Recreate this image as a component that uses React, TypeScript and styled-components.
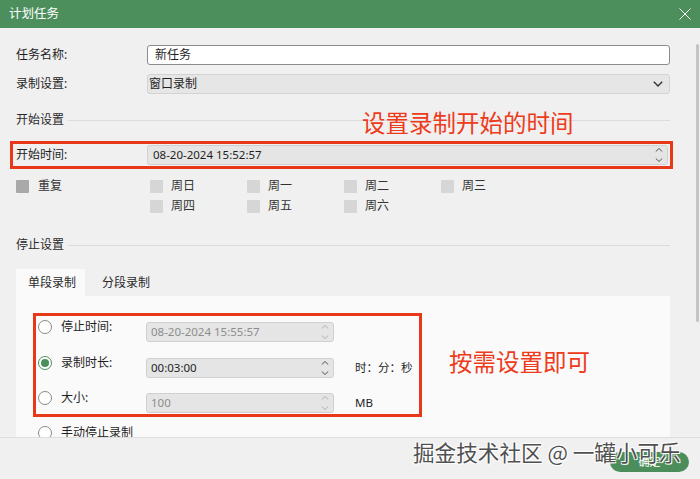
import React from 'react';
import styled, { createGlobalStyle } from 'styled-components';

const GlobalStyle = createGlobalStyle`
  html, body { margin: 0; padding: 0; }
  body {
    width: 700px; height: 479px; overflow: hidden;
    font-family: "Noto Sans", "Noto Sans CJK SC", sans-serif;
    font-size: 12px; color: #1f1f1f; background: #f0f0f0;
  }
  * { box-sizing: border-box; }
`;

const RED = '#e8381a';
const GREEN = '#4b8e5b';

const Window = styled.div`
  position: relative;
  width: 700px;
  height: 479px;
  display: flex;
  flex-direction: column;
  background: #f0f0f0;
  overflow: hidden;
`;

const TitleBar = styled.div`
  height: 28px;
  flex: none;
  background: #4c8f5d;
  color: #fff;
  display: flex;
  align-items: center;
  justify-content: space-between;
  padding: 0 9px 0 9px;
  font-size: 12.5px;
  line-height: 28px;
`;

const Main = styled.div`
  flex: 1;
  display: flex;
  min-height: 0;
  overflow: hidden;
`;

const Content = styled.div`
  flex: 1;
  display: flex;
  flex-direction: column;
  padding: 17px 20px 0 16px;
`;

const ScrollTrack = styled.div`
  width: 10px;
  flex: none;
  position: relative;
`;

const ScrollThumb = styled.div`
  position: absolute;
  right: 1px;
  top: 16px;
  width: 3px;
  height: 278px;
  border-radius: 2px;
  background: #c4c4c4;
`;

const FormRow = styled.div<{ $mt?: number }>`
  display: grid;
  grid-template-columns: 131px 1fr;
  align-items: center;
  height: 20px;
  margin-top: ${p => p.$mt ?? 0}px;
`;

const Label = styled.span`
  line-height: 16px;
  color: #1f1f1f;
`;

const TextInput = styled.div`
  height: 20px;
  background: #fff;
  border: 1px solid #8c8c8c;
  border-radius: 3px;
  padding: 0 7px;
  line-height: 18px;
`;

const Select = styled.div`
  height: 20px;
  background: #e6e6e6;
  border: 1px solid #d3d3d3;
  border-radius: 3px;
  padding: 0 6px 0 1px;
  display: flex;
  align-items: center;
  justify-content: space-between;
  line-height: 18px;
`;

const SpinBox = styled.div<{ $disabled?: boolean; $pl?: number }>`
  height: 20px;
  background: #e5e5e5;
  border: 1px solid #d0d0d0;
  border-radius: 3px;
  padding: 0 4px 0 ${p => p.$pl ?? 4}px;
  display: flex;
  align-items: center;
  justify-content: space-between;
  font-size: 11.5px;
  line-height: 18px;
  color: ${p => (p.$disabled ? '#8d8d8d' : '#1f1f1f')};
`;

const SectionHeading = styled.div<{ $mt: number }>`
  display: flex;
  align-items: center;
  gap: 4px;
  height: 16px;
  line-height: 16px;
  margin-top: ${p => p.$mt}px;
  color: #2a2a2a;
  &::after {
    content: '';
    flex: 1;
    height: 1px;
    background: #dcdcdc;
  }
`;

const HighlightRow = styled(FormRow)`
  height: 28px;
  border: 3px solid ${RED};
  margin: 13px -3px 0 -6px;
  padding: 1px 2px 1px 3px;
`;

const CheckGrid = styled.div`
  display: grid;
  grid-template-columns: 134px repeat(4, 97px);
  grid-auto-rows: 20px;
  margin-top: 7px;
`;

const CheckItem = styled.div<{ $gap: number }>`
  display: flex;
  align-items: center;
  gap: ${p => p.$gap}px;
  color: #333;
  line-height: 16px;
`;

const CheckBox = styled.span<{ $dark?: boolean }>`
  width: 13px;
  height: 13px;
  flex: none;
  background: ${p => (p.$dark ? '#a9a9a9' : '#d6d6d6')};
  border-radius: 1px;
`;

const TabBar = styled.div`
  display: flex;
  gap: 5px;
  margin-top: 16px;
  height: 27px;
`;

const Tab = styled.div<{ $active?: boolean }>`
  height: 27px;
  line-height: 27px;
  padding: 0 9px 0 12px;
  background: ${p => (p.$active ? '#fafafa' : 'transparent')};
  color: #2a2a2a;
`;

const Panel = styled.div`
  flex: 1;
  background: #fafafa;
  padding: 17px 0 0 17px;
  display: flex;
  flex-direction: column;
`;

const StopBox = styled.div`
  width: 389px;
  border: 3px solid ${RED};
  padding: 6px 0 1px 2px;
  display: flex;
  flex-direction: column;
  gap: 15.5px;
`;

const StopRow = styled.div`
  display: grid;
  grid-template-columns: 14px 94px 188px auto;
  align-items: start;
  height: 20px;
`;

const StopLabel = styled.span`
  padding-left: 9px;
  margin-top: -3px;
  line-height: 16px;
  color: #1f1f1f;
`;

const Unit = styled.span`
  align-self: center;
  padding-left: 21px;
  line-height: 16px;
  font-size: 11.5px;
  color: #1f1f1f;
  white-space: nowrap;
`;

const Radio = styled.span<{ $checked?: boolean }>`
  width: 14px;
  height: 14px;
  margin-top: -2px;
  border-radius: 50%;
  border: 1px solid ${p => (p.$checked ? GREEN : '#8a8a8a')};
  background: #fff;
  display: flex;
  align-items: center;
  justify-content: center;
  &::after {
    content: '';
    width: 8px;
    height: 8px;
    border-radius: 50%;
    background: ${p => (p.$checked ? GREEN : 'transparent')};
  }
`;

const ManualRow = styled.div`
  display: flex;
  align-items: center;
  gap: 9px;
  height: 20px;
  margin-top: 6px;
  padding-left: 5px;
  line-height: 16px;
  & > span:first-child { margin-top: 0; }
`;

const Footer = styled.div`
  height: 42px;
  flex: none;
  border-top: 1px solid #dedede;
  background: #f0f0f0;
  display: flex;
  justify-content: flex-end;
  align-items: flex-start;
  padding: 14px 11px 0 0;
`;

const OkButton = styled.div`
  width: 79px;
  height: 20px;
  border-radius: 10px;
  background: ${GREEN};
  color: #fff;
  font-size: 11px;
  line-height: 20px;
  text-align: center;
`;

const Annotation = styled.div<{ $left: number; $top: number }>`
  position: absolute;
  left: ${p => p.$left}px;
  top: ${p => p.$top}px;
  font-family: "Noto Sans CJK SC", sans-serif;
  font-size: 23.5px;
  line-height: 28px;
  color: #ee3b1b;
  white-space: nowrap;
`;

const Watermark = styled.div`
  position: absolute;
  left: 413px;
  top: 439px;
  font-family: "Noto Sans CJK SC", sans-serif;
  font-size: 21.6px;
  line-height: 25px;
  color: #505050;
  white-space: nowrap;
  text-shadow: 1px 1px 0 #fff, -1px -1px 0 rgba(255,255,255,0.8), 1px -1px 0 rgba(255,255,255,0.8), -1px 1px 0 rgba(255,255,255,0.8);
`;

const CloseIcon = () => (
  <svg width="12" height="12" viewBox="0 0 12 12">
    <path d="M0.5 0.5 L11.5 11.5 M11.5 0.5 L0.5 11.5" stroke="#fff" strokeWidth="1" fill="none" />
  </svg>
);

const ChevronDown = () => (
  <svg width="10" height="6" viewBox="0 0 10 6">
    <path d="M0.8 0.8 L5 5 L9.2 0.8" stroke="#333" strokeWidth="1.4" fill="none" />
  </svg>
);

const Spinner = ({ color = '#555' }: { color?: string }) => (
  <svg width="8" height="16" viewBox="0 0 8 16">
    <path d="M0.8 4.5 L4 1.5 L7.2 4.5" stroke={color} strokeWidth="1" fill="none" />
    <path d="M0.8 11.5 L4 14.5 L7.2 11.5" stroke={color} strokeWidth="1" fill="none" />
  </svg>
);

const days: (string | null)[] = ['周日', '周一', '周二', '周三', null, '周四', '周五', '周六'];

export default function App() {
  return (
    <>
      <GlobalStyle />
      <Window>
        <TitleBar>
          <span>计划任务</span>
          <CloseIcon />
        </TitleBar>
        <Main>
          <Content>
            <FormRow>
              <Label>任务名称:</Label>
              <TextInput>新任务</TextInput>
            </FormRow>
            <FormRow $mt={9}>
              <Label>录制设置:</Label>
              <Select>
                <span>窗口录制</span>
                <ChevronDown />
              </Select>
            </FormRow>
            <SectionHeading $mt={18}>开始设置</SectionHeading>
            <HighlightRow>
              <Label>开始时间:</Label>
              <SpinBox $pl={5}>
                <span>08-20-2024 15:52:57</span>
                <Spinner />
              </SpinBox>
            </HighlightRow>
            <CheckGrid>
              <CheckItem $gap={9}>
                <CheckBox $dark />
                <span>重复</span>
              </CheckItem>
              {days.map((d, i) =>
                d ? (
                  <CheckItem key={i} $gap={8}>
                    <CheckBox />
                    <span>{d}</span>
                  </CheckItem>
                ) : (
                  <span key={i} />
                )
              )}
            </CheckGrid>
            <SectionHeading $mt={21}>停止设置</SectionHeading>
            <TabBar>
              <Tab $active>单段录制</Tab>
              <Tab>分段录制</Tab>
            </TabBar>
            <Panel>
              <StopBox>
                <StopRow>
                  <Radio />
                  <StopLabel>停止时间:</StopLabel>
                  <SpinBox $disabled>
                    <span>08-20-2024 15:55:57</span>
                    <Spinner color="#b0b0b0" />
                  </SpinBox>
                </StopRow>
                <StopRow>
                  <Radio $checked />
                  <StopLabel>录制时长:</StopLabel>
                  <SpinBox>
                    <span>00:03:00</span>
                    <Spinner />
                  </SpinBox>
                  <Unit>时：分：秒</Unit>
                </StopRow>
                <StopRow>
                  <Radio />
                  <StopLabel>大小:</StopLabel>
                  <SpinBox $disabled>
                    <span>100</span>
                    <Spinner color="#b0b0b0" />
                  </SpinBox>
                  <Unit>MB</Unit>
                </StopRow>
              </StopBox>
              <ManualRow>
                <Radio />
                <span>手动停止录制</span>
              </ManualRow>
            </Panel>
          </Content>
          <ScrollTrack>
            <ScrollThumb />
          </ScrollTrack>
        </Main>
        <Footer>
          <OkButton>确定</OkButton>
        </Footer>
        <Annotation $left={362} $top={108}>设置录制开始的时间</Annotation>
        <Annotation $left={449} $top={347}>按需设置即可</Annotation>
        <Watermark>掘金技术社区 @ 一罐小可乐</Watermark>
      </Window>
    </>
  );
}
